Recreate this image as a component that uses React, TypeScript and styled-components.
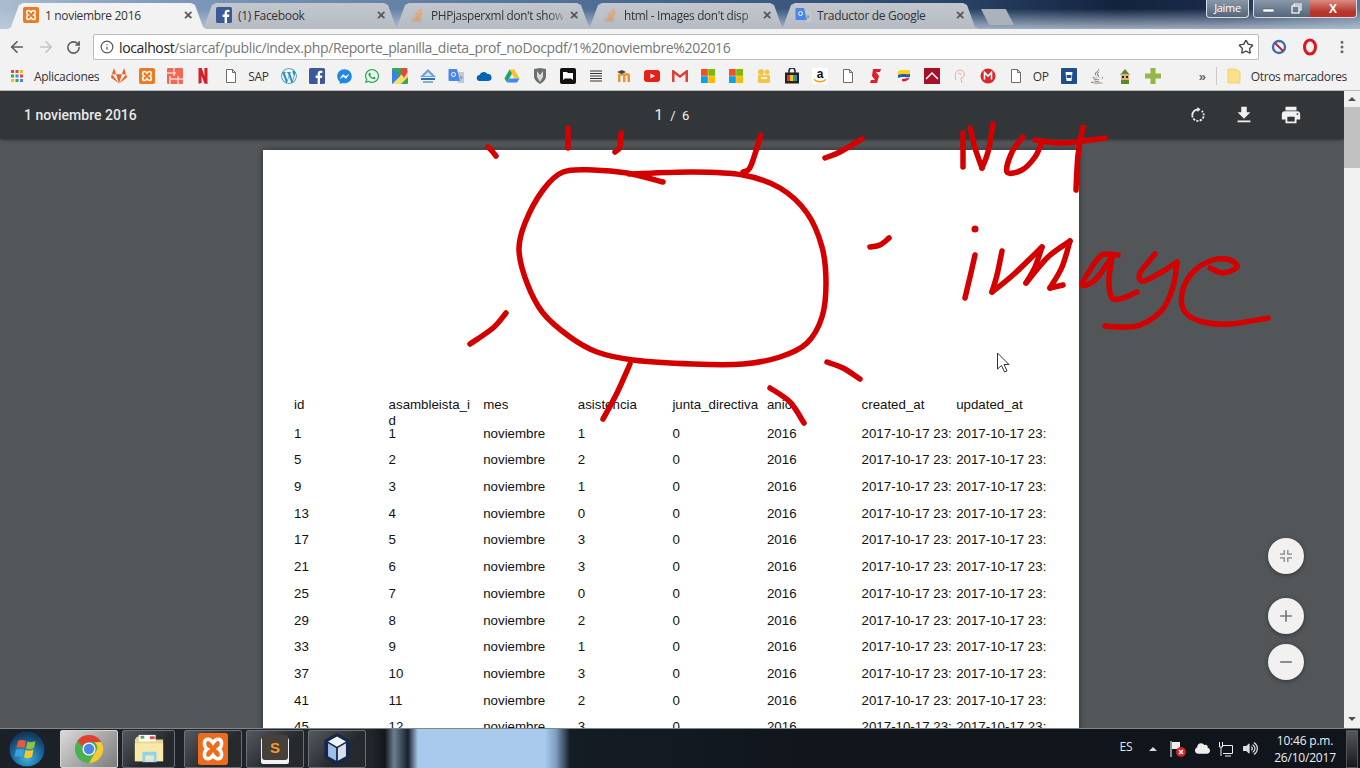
import React from 'react';
import { styled, createGlobalStyle } from 'styled-components';
import { ArrowLeft, ArrowRight, RotateCw, Star, Info, MoreVertical } from 'lucide-react';
import { FaGitlab, FaWordpressSimple, FaFacebookMessenger, FaWhatsapp, FaJava, FaCloud, FaVolumeUp } from 'react-icons/fa';
import { MdFileDownload, MdPrint, MdAdd, MdRemove } from 'react-icons/md';

const Global = createGlobalStyle`
  html, body { margin: 0; padding: 0; overflow: hidden; background: #525659; }
  * { box-sizing: border-box; }
`;

/* ---------- little logos ---------- */

const Xampp = ({ size = 16 }: { size?: number }) => (
  <svg width={size} height={size} viewBox="0 0 16 16">
    <rect width="16" height="16" rx="2" fill="#f0781e" />
    <path d="M5.5 3.5c-2.4 0-2.4 3.6-.4 4.5-2 .9-2 4.5.4 4.5 1.2 0 2-1 2.5-1.8.5.8 1.3 1.8 2.5 1.8 2.4 0 2.4-3.6.4-4.5 2-.9 2-4.5-.4-4.5-1.2 0-2 1-2.5 1.8-.5-.8-1.3-1.8-2.5-1.8z" fill="none" stroke="#fff" strokeWidth="1.6" />
  </svg>
);
const FbSquare = ({ c = '#3b5998' }: { c?: string }) => (
  <svg width="16" height="16" viewBox="0 0 16 16">
    <rect width="16" height="16" rx="1.5" fill={c} />
    <path d="M11 16v-6h2l.3-2.4H11V6.2c0-.7.2-1.2 1.2-1.2h1.2V2.900c-.3 0-1-.1-1.800-.1-1.800 0-3 1.100-3 3.100v1.700h-2V10h2v6z" fill="#fff" />
  </svg>
);
const StackIcon = () => (
  <svg width="16" height="16" viewBox="0 0 16 16" fill="none" strokeWidth="1.3">
    <path d="M3 10v4.500h9V10" stroke="#b9b2a8" />
    <path d="M4.500 13h6M4.700 10.800l5.800.8M5.300 8.500l5.600 2M6.500 6l5 3.200" stroke="#e59a5c" />
    <path d="M8.500 3.500l3.800 4.500M11 1.500l2 5.400" stroke="#e8a468" />
  </svg>
);
const GTranslate = () => (
  <svg width="16" height="16" viewBox="0 0 16 16">
    <path d="M8 4l8 0v11l-6 0z" fill="#c4c9cf" />
    <path d="M1.500 1h7.500l3 12H1.500a1 1 0 0 1-1-1V2a1 1 0 0 1 1-1z" fill="#4a86e8" />
    <circle cx="5.500" cy="6.500" r="2" fill="none" stroke="#fff" strokeWidth="1" />
    <path d="M13 7l.6 1.800h1.600l-1.300 1 .5 1.800-1.400-1-1.400 1 .5-1.800z" fill="#8d949c" />
  </svg>
);
const PageIcon = () => (
  <svg width="16" height="16" viewBox="0 0 16 16" fill="#fff" stroke="#6c6c6c">
    <path d="M3.500 1.500h6l3 3v10h-9zM9.500 1.500v3h3" />
  </svg>
);
const AppsGrid = () => (
  <svg width="16" height="16" viewBox="0 0 16 16">
    {['#ea4335', '#e8483a', '#fbbc05', '#34a853', '#4285f4', '#ea4335', '#fbbc05', '#34a853', '#4285f4'].map((c, i) => (
      <rect key={i} x={2 + (i % 3) * 4.500} y={2 + Math.floor(i / 3) * 4.500} width="3" height="3" fill={c} />
    ))}
  </svg>
);
const Brackets = () => (
  <svg width="16" height="16" viewBox="0 0 16 16">
    <rect width="16" height="16" rx="1" fill="#ef6a53" />
    <path d="M0 5h9M7 0v8M3 8v8M3 11h13M11 8v8" stroke="#fff" strokeWidth="1" />
  </svg>
);
const Netflix = () => (
  <svg width="16" height="16" viewBox="0 0 16 16">
    <path d="M3.500 0h3.200l2.700 8V0h3.100v16l-3.100-.5-2.800-7.700V15l-3.100.8z" fill="#d81f26" />
  </svg>
);
const Maps = () => (
  <svg width="16" height="16" viewBox="0 0 16 16">
    <rect width="16" height="16" rx="1" fill="#35a853" />
    <path d="M0 16L16 0v9l-7 7z" fill="#f7e06a" />
    <path d="M0 16L8 8 0 1z" fill="#3f7fe8" />
    <path d="M12 0a3.500 3.500 0 0 1 3.500 3.500C15.500 6 12.500 8 12 10c-.5-2-3.500-4-3.500-6.500A3.500 3.500 0 0 1 12 0z" fill="#e2493b" />
  </svg>
);
const Mountains = () => (
  <svg width="16" height="16" viewBox="0 0 16 16">
    <path d="M8 1l8 8H0z" fill="#6fa0d8" />
    <path d="M8 4l4 4H4z" fill="#d9e8f6" />
    <path d="M1 10h14v2H1z" fill="#2f70b5" />
    <path d="M3 13h10v2H3z" fill="#80aede" />
  </svg>
);
const OneDrive = ({ c = '#0a64b4' }: { c?: string }) => (
  <svg width="16" height="16" viewBox="0 0 16 16">
    <path d="M4 13a3 3 0 0 1-.5-6A4.500 4.500 0 0 1 11.500 6 3.500 3.500 0 0 1 12.500 13z" fill={c} />
  </svg>
);
const GDrive = () => (
  <svg width="16" height="16" viewBox="0 0 16 16">
    <path d="M5.500 1.500h5l5 9h-5z" fill="#fbc02d" />
    <path d="M5.500 1.500L.5 10.500 3 14.500l5-9z" fill="#1fa463" />
    <path d="M3 14.500h10l2.500-4H5.500z" fill="#4285f4" />
  </svg>
);
const Shield = () => (
  <svg width="16" height="16" viewBox="0 0 16 16">
    <path d="M2 1l6-1 6 1v7c0 4-3 6-6 8-3-2-6-4-6-8z" fill="#6b6f70" />
    <path d="M5 3l3 4 3-4v6l-3 5-3-5z" fill="#d7d9d9" />
  </svg>
);
const BlackBox = () => (
  <svg width="16" height="16" viewBox="0 0 16 16">
    <rect width="16" height="16" rx="2" fill="#111" />
    <path d="M3 4h4l1 1h5v7l-2-1.500H5L3 12z" fill="#fff" />
  </svg>
);
const Lines = () => (
  <svg width="16" height="16" viewBox="0 0 16 16">
    <path d="M2 3h12M2 5.500h12M2 8h12M2 10.500h12M2 13h12" stroke="#333" strokeWidth="1" />
  </svg>
);
const Moodle = () => (
  <svg width="16" height="16" viewBox="0 0 16 16">
    <path d="M2 7c0-2 4-3 6-1 2-2 6-1 6 1v7h-2.500V8c-1-1-2-.5-2 .5V14H7V8.500c0-1-1-1.500-2.500-.5v6H2z" fill="#e8962e" />
    <path d="M1 4l5-2 4 2-4 2z" fill="#444" />
  </svg>
);
const Youtube = () => (
  <svg width="16" height="16" viewBox="0 0 16 16">
    <rect y="2" width="16" height="12" rx="3" fill="#e62117" />
    <path d="M6.500 5.500L11 8l-4.500 2.500z" fill="#fff" />
  </svg>
);
const Gmail = () => (
  <svg width="16" height="16" viewBox="0 0 16 16">
    <rect y="2" width="16" height="12" fill="#eee" />
    <path d="M0 2v12h2.500V6L8 10l5.500-4v8H16V2h-1.500L8 7 1.500 2z" fill="#d44638" />
  </svg>
);
const Windows = () => (
  <svg width="16" height="16" viewBox="0 0 16 16">
    <rect x="1" y="1" width="6.800" height="6.800" fill="#f25022" />
    <rect x="8.200" y="1" width="6.800" height="6.800" fill="#7fba00" />
    <rect x="1" y="8.200" width="6.800" height="6.800" fill="#00a4ef" />
    <rect x="8.200" y="8.200" width="6.800" height="6.800" fill="#ffb900" />
  </svg>
);
const Film = () => (
  <svg width="16" height="16" viewBox="0 0 16 16">
    <circle cx="5" cy="4" r="3" fill="#f4c545" />
    <circle cx="11" cy="4" r="2.500" fill="#f4c545" />
    <rect x="2" y="7" width="12" height="8" rx="1" fill="#f4c545" />
    <path d="M5 10h6" stroke="#fff" strokeWidth="1.500" />
  </svg>
);
const Bag = () => (
  <svg width="16" height="16" viewBox="0 0 16 16">
    <path d="M5 5V3a3 3 0 0 1 6 0v2" fill="none" stroke="#222" strokeWidth="1.500" />
    <rect x="1" y="4.500" width="14" height="11" fill="#222" />
    <path d="M3 7h3v6H3z" fill="#e8372c" />
    <path d="M6 7h3v6H6z" fill="#f7c325" />
    <path d="M9 7h2v6H9z" fill="#3ba55d" />
    <path d="M11 7h2v6h-2z" fill="#2f80d0" />
  </svg>
);
const Amazon = () => (
  <svg width="16" height="16" viewBox="0 0 16 16">
    <rect width="16" height="16" rx="2" fill="#fff" />
    <text x="8" y="10" textAnchor="middle" fontSize="12" fontWeight="700" fontFamily="Liberation Sans, sans-serif" fill="#111">a</text>
    <path d="M2 11.500c3.500 3 8.500 3 12 0" fill="none" stroke="#f90" strokeWidth="1.500" />
  </svg>
);
const Scotia = () => (
  <svg width="16" height="16" viewBox="0 0 16 16">
    <path d="M5 1h8l-1 3H8l3 4-2 7H2l1-3h4L4 8z" fill="#e01f26" />
  </svg>
);
const FlagMark = () => (
  <svg width="16" height="16" viewBox="0 0 16 16">
    <path d="M2 3c4-2 8 0 12-1v4c-4 1-8-1-12 1z" fill="#fcd116" />
    <path d="M2 7c4-2 8 0 12-1v3c-4 1-8-1-12 1z" fill="#1e5bb0" />
    <path d="M6 11l7-1v1c-2 2-5 3-7 2z" fill="#d6202c" />
  </svg>
);
const RedTent = () => (
  <svg width="16" height="16" viewBox="0 0 16 16">
    <rect width="16" height="16" fill="#a4122a" />
    <path d="M2 11l6-6 6 6" fill="none" stroke="#fff" strokeWidth="1.500" />
  </svg>
);
const Sketchy = () => (
  <svg width="16" height="16" viewBox="0 0 16 16" fill="none" stroke="#eda6a0" strokeWidth="1">
    <path d="M4 12C2 7 4 2 8 2c3 0 5 3 4 6-1 2-3 1-3 3l1 4M6 6c1-1 3-1 3 1" />
  </svg>
);
const Mega = () => (
  <svg width="16" height="16" viewBox="0 0 16 16">
    <circle cx="8" cy="8" r="7.500" fill="#d9272e" />
    <path d="M4.500 11.500v-7L8 8l3.500-3.500v7" fill="none" stroke="#fff" strokeWidth="1.600" />
  </svg>
);
const BlueCup = () => (
  <svg width="16" height="16" viewBox="0 0 16 16">
    <rect width="16" height="16" rx="1" fill="#1f4f8b" />
    <path d="M4.500 4h7l-1 9h-5z" fill="#fff" />
    <path d="M5.500 7h5l-.3 3H5.800z" fill="#1f4f8b" />
  </svg>
);
const Link = () => (
  <svg width="16" height="16" viewBox="0 0 16 16">
    <path d="M3 7l5-6 5 6z" fill="#5c8a2a" />
    <rect x="4" y="6" width="8" height="6" fill="#e2b27a" />
    <rect x="5" y="8" width="2" height="2" fill="#222" />
    <rect x="9" y="8" width="2" height="2" fill="#222" />
    <rect x="4" y="12" width="8" height="4" fill="#5c8a2a" />
  </svg>
);
const Plus = () => (
  <svg width="16" height="16" viewBox="0 0 16 16">
    <path d="M5.500 0h5v5.500H16v5h-5.500V16h-5v-5.500H0v-5h5.500z" fill="#93b84a" />
  </svg>
);
const FolderMark = () => (
  <svg width="16" height="16" viewBox="0 0 16 16">
    <path d="M2 1h8l4 3v11H2z" fill="#fbe08a" stroke="#e9c860" strokeWidth=".7" />
  </svg>
);
const RotateDashed = () => (
  <svg width="20" height="20" viewBox="0 0 20 20" fill="none" stroke="#f1f1f1" strokeWidth="1.800">
    <path d="M10 4.500a5.700 5.700 0 0 0-5.700 5.700" />
    <path d="M4.300 10.200a5.700 5.700 0 0 0 11.400 0" strokeDasharray="2.200 1.300" />
    <path d="M15.700 10.200a5.700 5.700 0 0 0-2-4.300" strokeDasharray="1.600 1.400" />
    <path d="M9.500 2v5l3-2.500z" fill="#f1f1f1" stroke="none" />
  </svg>
);
const FitIcon = () => (
  <svg width="12" height="12" viewBox="0 0 12 12" fill="none" stroke="#858585" strokeWidth="1.300">
    <path d="M4.200 0v4.200H0M7.800 0v4.200H12M4.200 12V7.800H0M7.800 12V7.800H12" />
  </svg>
);
const ChromeLogo = () => (
  <svg width="30" height="30" viewBox="0 0 32 32">
    <circle cx="16" cy="16" r="15" fill="#4caf50" />
    <path d="M16 1a15 15 0 0 1 13 7.500H16a7.500 7.500 0 0 0-7 4.500L3.500 7.500A15 15 0 0 1 16 1z" fill="#e53f35" />
    <path d="M29 8.500A15 15 0 0 1 16 31l6.500-11A7.500 7.500 0 0 0 22 8.500z" fill="#fcc934" />
    <circle cx="16" cy="16" r="7" fill="#f3f3f3" />
    <circle cx="16" cy="16" r="5.500" fill="#4a86e8" />
  </svg>
);
const FolderLogo = () => (
  <svg width="32" height="32" viewBox="0 0 34 32">
    <path d="M2 6l2-3h9l2 3h17v23H2z" fill="#e8d58e" />
    <rect x="6" y="1" width="18" height="7" fill="#fff" />
    <rect x="8" y="2" width="4" height="3" fill="#4caf50" />
    <rect x="18" y="2.500" width="5" height="3" fill="#e2493b" />
    <path d="M2 10h30v19H2z" fill="#f8e9a8" />
    <path d="M10 19h15v11h-3v-7H13v7h-3z" fill="#8fd3f0" />
    <rect x="13" y="27" width="9" height="3" fill="#bfe6f6" />
  </svg>
);
const XamppLogo = () => (
  <svg width="30" height="32" viewBox="0 0 34 36">
    <rect width="34" height="36" rx="3" fill="#ee6c1d" />
    <path d="M11.500 7C6 7 6 15 10.500 18 6 21 6 29 11.500 29c2.800 0 4.500-2.500 5.500-4 1 1.500 2.700 4 5.500 4C28 29 28 21 23.500 18 28 15 28 7 22.500 7c-2.800 0-4.500 2.500-5.500 4-1-1.500-2.700-4-5.500-4z" fill="none" stroke="#fff" strokeWidth="4" />
  </svg>
);
const SublimeLogo = () => (
  <svg width="30" height="30" viewBox="0 0 30 30">
    <rect x="1" y="4" width="28" height="26" rx="2" fill="#f1f1f1" />
    <rect x="2" y="1" width="26" height="25" rx="3" fill="#45403c" />
    <text x="15" y="19" textAnchor="middle" fontSize="15" fontFamily="Liberation Sans, sans-serif" fontWeight="700" fill="#f39a2c">S</text>
  </svg>
);
const CubeLogo = () => (
  <svg width="28" height="34" viewBox="0 0 30 38">
    <path d="M15 1l14 8v20l-14 8-14-8V9z" fill="#132750" />
    <path d="M15 5l10 5.500-10 6-10-6z" fill="#f0f4f8" />
    <path d="M5 12.500l9 5.500v14l-9-5z" fill="#9fc0e6" />
    <path d="M25 12.500l-9 5.500v14l9-5z" fill="#d9dfe6" />
  </svg>
);
const WinOrb = () => (
  <svg width="38" height="38" viewBox="0 0 38 38">
    <defs>
      <radialGradient id="orb" cx="50%" cy="75%" r="65%">
        <stop offset="0" stopColor="#3fb0dc" />
        <stop offset=".6" stopColor="#1c6a9c" />
        <stop offset="1" stopColor="#153a5c" />
      </radialGradient>
    </defs>
    <circle cx="19" cy="19" r="18" fill="url(#orb)" stroke="#0d2438" />
    <path d="M10 11c3-1.500 5-1 8 0l-1.500 7c-3-1-5-1-8 0z" fill="#e8583a" />
    <path d="M19.500 11.500c3 1 5 1 8-.5l-1.500 7c-3 1.500-5 1.500-8 .5z" fill="#8cc63f" />
    <path d="M8 19.500c3-1 5-1 8 0L14.500 27c-3-1-5-1-8 0z" fill="#3aa0e0" />
    <path d="M17.500 20c3 1 5 1 8-.5L24 27c-3 1.500-5 1.500-8 .5z" fill="#f7c52d" />
  </svg>
);

/* ---------- window chrome ---------- */

const Frame = styled.div`
  position: relative;
  width: 1360px;
  height: 768px;
  display: flex;
  flex-direction: column;
  overflow: hidden;
  font-family: 'Open Sans', 'Liberation Sans', sans-serif;
`;
const TabStrip = styled.div`
  height: 29px;
  flex: none;
  display: flex;
  padding: 3px 0 0 8px;
  background:
    linear-gradient(180deg, rgba(20, 40, 70, 0) 30%, rgba(190, 205, 220, 0.8) 100%),
    linear-gradient(90deg, #a9bdd0 0, #7f9abb 12%, #46648c 50%, #2a4468 70%, #12233f 82%, #1a2c4a 90%, #5c7690 100%);
`;
const Tab = styled.div<{ $active?: boolean }>`
  width: 198px;
  height: 26px;
  margin-right: -5px;
  padding: 0 13px 2px 15px;
  display: flex;
  align-items: center;
  gap: 6px;
  font-size: 12px;
  letter-spacing: -0.33px;
  color: #333;
  position: relative;
  z-index: ${(p) => (p.$active ? 2 : 1)};
  background: ${(p) => (p.$active ? '#f2f2f2' : 'linear-gradient(180deg,#c2c7cd,#b6bcc4)')};
  clip-path: polygon(0 100%, 3px 92%, 11px 8%, 15px 0, calc(100% - 15px) 0, calc(100% - 11px) 8%, calc(100% - 3px) 92%, 100% 100%);
`;
const TabTitle = styled.span<{ $fade?: boolean }>`
  flex: 1;
  min-width: 0;
  white-space: nowrap;
  overflow: hidden;
  font-size: ${(p) => (p.$fade ? '11.8px' : '12px')};
  -webkit-mask-image: ${(p) => (p.$fade ? 'linear-gradient(90deg,#000 88%,rgba(0,0,0,.25) 100%)' : 'none')};
`;
const TabClose = styled.span`
  width: 10px;
  height: 10px;
  font: 700 15px/10px 'Liberation Sans', sans-serif;
  color: #555;
  text-align: center;
`;
const NewTab = styled.div`
  width: 33px;
  height: 16px;
  margin: 6px 0 0 8px;
  background: #aab2bc;
  clip-path: polygon(0 0, 75% 0, 100% 100%, 25% 100%);
`;
const WindowControls = styled.div`
  margin-left: auto;
  margin-top: -3px;
  padding-right: 3px;
  display: flex;
  gap: 4px;
  height: 18px;
`;
const UserBadge = styled.div`
  width: 43px;
  height: 18px;
  border: 1px solid #d7dde4;
  border-top: 0;
  border-radius: 0 0 4px 4px;
  background: linear-gradient(180deg, #8a98a8, #55657a);
  color: #fff;
  font-size: 11px;
  letter-spacing: -0.3px;
  text-align: center;
  line-height: 16px;
`;
const Caption = styled.div`
  display: flex;
  height: 18px;
  border: 1px solid #d7dde4;
  border-top: 0;
  border-radius: 0 0 4px 4px;
  overflow: hidden;
`;
const CaptionBtn = styled.div<{ $w: number; $close?: boolean }>`
  width: ${(p) => p.$w}px;
  display: flex;
  align-items: center;
  justify-content: center;
  background: ${(p) => (p.$close ? 'linear-gradient(180deg,#d98c80,#b8342a 70%)' : 'linear-gradient(180deg,#8a98a8,#55657a)')};
  color: #fff;
  font: 700 12px 'Liberation Sans', sans-serif;
`;
const Toolbar = styled.div`
  height: 34px;
  flex: none;
  background: #f2f2f2;
  display: flex;
  align-items: center;
  padding: 2px 0 0 7px;
`;
const NavBtn = styled.div<{ $w?: number }>`
  width: ${(p) => p.$w ?? 28}px;
  display: flex;
  justify-content: center;
`;
const Omnibox = styled.div`
  width: 1166px;
  height: 26px;
  margin: 0 8px 0 12px;
  background: #fff;
  border: 1px solid #bdbdbd;
  border-radius: 2px;
  display: flex;
  align-items: center;
  padding: 0 4px 0 6px;
  font-size: 14px;
  letter-spacing: -0.37px;
  color: #767676;
`;
const Url = styled.span`
  flex: 1;
  margin-left: 5px;
  white-space: nowrap;
  b { font-weight: 400; color: #222; }
`;
const BookmarksBar = styled.div`
  height: 28px;
  flex: none;
  background: #f2f2f2;
  border-bottom: 1px solid #b9b9b9;
  display: flex;
  align-items: center;
  padding: 0 7px 1px 3px;
  font-size: 12px;
  letter-spacing: -0.33px;
  color: #333;
`;
const Bookmark = styled.div`
  height: 22px;
  padding: 0 6px;
  display: flex;
  align-items: center;
  gap: 9px;
  flex: none;
  white-space: nowrap;
  svg { flex: none; }
`;
const Chevrons = styled.span`
  margin-left: auto;
  margin-right: 10px;
  font: 700 13px 'Liberation Sans', sans-serif;
  color: #666;
`;
const Divider = styled.span`
  width: 1px;
  height: 18px;
  background: #ccc;
  margin-right: 3px;
`;

/* ---------- pdf viewer ---------- */

const Viewer = styled.div`
  flex: 1;
  min-height: 0;
  display: flex;
  position: relative;
`;
const ViewerMain = styled.div`
  flex: 1;
  display: flex;
  flex-direction: column;
  background: #525659;
  min-width: 0;
  overflow: hidden;
`;
const PdfBar = styled.div`
  height: 48px;
  flex: none;
  background: #323639;
  box-shadow: 0 1px 3px rgba(0, 0, 0, 0.4);
  display: grid;
  grid-template-columns: 1fr 60px 1fr;
  align-items: center;
  padding: 0 42px 0 24px;
  color: #f1f1f1;
  font-family: Roboto, 'Liberation Sans', sans-serif;
`;
const PdfTitle = styled.div`
  font-size: 14px;
  font-weight: 500;
  color: #e8e8e8;
`;
const PageCount = styled.div`
  font-size: 13px;
  text-align: center;
  margin-left: 18px;
  white-space: nowrap;
  span { font-size: 15px; margin-right: 4px; }
`;
const PdfActions = styled.div`
  display: flex;
  justify-content: flex-end;
  align-items: center;
  gap: 25px;
`;
const PaperArea = styled.div`
  flex: 1;
  padding: 11px 0 0 263px;
`;
const Paper = styled.div`
  width: 816px;
  height: 900px;
  background: #fff;
  box-shadow: 0 0 6px rgba(0, 0, 0, 0.45);
  padding: 247px 0 0 31px;
  font: 13.3px/16px 'Liberation Sans', Arial, sans-serif;
  color: #111;
`;
const Row = styled.div<{ $head?: boolean }>`
  display: grid;
  grid-template-columns: repeat(8, 94.6px);
  height: ${(p) => (p.$head ? 28.7 : 26.7)}px;
`;
const Cell = styled.div`
  padding-right: 7.5px;
  word-break: break-all;
`;
const DateCell = styled.div`
  white-space: nowrap;
`;
const Scrollbar = styled.div`
  width: 16px;
  flex: none;
  background: #f1f1f1;
  display: flex;
  flex-direction: column;
  align-items: center;
  padding-top: 6px;
`;
const ArrowGlyph = styled.div<{ $down?: boolean; $light?: boolean }>`
  width: 0;
  height: 0;
  border-left: 4px solid transparent;
  border-right: 4px solid transparent;
  border-bottom: ${(p) => (p.$down ? '0' : `4px solid ${p.$light ? '#ddd' : '#505050'}`)};
  border-top: ${(p) => (p.$down ? '4px solid #505050' : '0')};
  margin-top: ${(p) => (p.$down ? 'auto' : '0')};
  margin-bottom: ${(p) => (p.$down ? '7px' : '0')};
`;
const Thumb = styled.div`
  width: 16px;
  height: 61px;
  margin-top: 6px;
  background: #c1c1c1;
`;
const FabStack = styled.div`
  position: absolute;
  right: 56px;
  top: 447px;
  display: flex;
  flex-direction: column;
  z-index: 3;
`;
const Fab = styled.div<{ $gap?: number }>`
  width: 36px;
  height: 36px;
  border-radius: 50%;
  background: #f1f1f1;
  box-shadow: 0 1px 4px rgba(0, 0, 0, 0.4);
  display: flex;
  align-items: center;
  justify-content: center;
  color: #777;
  margin-bottom: ${(p) => p.$gap ?? 0}px;
`;

/* ---------- taskbar ---------- */

const Taskbar = styled.div`
  height: 40px;
  flex: none;
  display: flex;
  align-items: center;
  padding: 0 2px 0 8px;
  border-top: 1px solid #7c8890;
  background:
    linear-gradient(90deg, #1a2026 0, #20262c 370px, #13181c 385px, #6c7f92 394px, #16202a 408px, #a8c9ec 418px, #a8c9ec 545px, #7d9ebf 556px, #141c24 570px, #10161c 800px, #10151b 100%);
`;
const Orb = styled.div`
  width: 38px;
  height: 38px;
  margin-right: 14px;
  display: flex;
`;
const TaskButton = styled.div<{ $active?: boolean; $gap?: number; $w?: number }>`
  width: ${(p) => p.$w ?? 58}px;
  height: 38px;
  margin-right: ${(p) => p.$gap ?? 4}px;
  border: 1px solid ${(p) => (p.$active ? '#d5d5d5' : '#6a7076')};
  border-radius: 2px;
  display: flex;
  align-items: center;
  justify-content: center;
  background: ${(p) =>
    p.$active ? 'linear-gradient(135deg,#dadada,#7b7b7b)' : 'linear-gradient(135deg,#55595e,#26292c 60%)'};
`;
const Tray = styled.div`
  margin-left: auto;
  display: flex;
  align-items: center;
  color: #e8e8e8;
  font-size: 12px;
`;
const TrayItem = styled.div<{ $w: number; $raise?: number }>`
  width: ${(p) => p.$w}px;
  display: flex;
  justify-content: center;
  margin-bottom: ${(p) => p.$raise ?? 0}px;
`;
const Clock = styled.div`
  width: 72px;
  margin-left: 7px;
  text-align: center;
  font-size: 12px;
  line-height: 17px;
  letter-spacing: -0.2px;
  color: #eee;
`;
const ShowDesktop = styled.div`
  width: 12px;
  height: 38px;
  margin-left: 5px;
  border: 1px solid #555;
  background: linear-gradient(180deg, #55595c, #15181a);
`;

/* ---------- the red ink drawn over the capture ---------- */

const InkLayer = styled.svg`
  position: absolute;
  left: 0;
  top: 0;
  width: 1360px;
  height: 768px;
  pointer-events: none;
  z-index: 2;
`;
// catmull-rom through the traced points
const smooth = (p: number[][]) => {
  let d = `M${p[0][0]} ${p[0][1]}`;
  for (let i = 0; i < p.length - 1; i++) {
    const a = p[i - 1] ?? p[i];
    const b = p[i];
    const c = p[i + 1];
    const e = p[i + 2] ?? c;
    d += ` C${b[0] + (c[0] - a[0]) / 6} ${b[1] + (c[1] - a[1]) / 6} ${c[0] - (e[0] - b[0]) / 6} ${c[1] - (e[1] - b[1]) / 6} ${c[0]} ${c[1]}`;
  }
  return d;
};
const strokes: number[][][] = [
  [[629, 174], [693, 172], [743, 175], [780, 188], [807, 213], [822, 247], [826, 283], [822, 317], [807, 343], [780, 357], [743, 364], [693, 364], [633, 360], [597, 352], [570, 337], [543, 313], [527, 283], [519, 250], [525, 223], [543, 190], [563, 172], [593, 170], [627, 173], [663, 182]],
  [[488, 147], [492, 151], [496, 156]],
  [[568, 128], [568, 138], [568, 148]],
  [[621, 133], [620, 147], [615, 152]],
  [[761, 135], [752, 163], [748, 170], [743, 172]],
  [[862, 139], [840, 152], [825, 158]],
  [[870, 247], [880, 245], [889, 238]],
  [[506, 313], [493, 328], [470, 344]],
  [[630, 364], [617, 393], [603, 419]],
  [[770, 388], [790, 402], [804, 423]],
  [[827, 362], [843, 368], [860, 379]],
  // Not
  [[963, 167], [963, 145], [963, 133]],
  [[970, 128], [975, 148], [982, 168]],
  [[982, 168], [988, 152], [993, 124]],
  [[1023, 137], [1012, 152], [1007, 172], [1022, 170], [1035, 157], [1042, 142]],
  [[1035, 140], [1063, 143], [1105, 138]],
  [[1083, 127], [1078, 155], [1076, 190]],
  // image
  [[975, 255], [970, 277], [965, 298]],
  [[1002, 251], [997, 275], [992, 292]],
  [[992, 292], [1013, 275], [1042, 247]],
  [[1042, 247], [1035, 267], [1026, 283]],
  [[1026, 283], [1048, 257], [1070, 241]],
  [[1070, 241], [1062, 267], [1050, 288]],
  [[1050, 288], [1063, 285]],
  [[1118, 255], [1102, 255], [1090, 270], [1082, 285], [1095, 280], [1112, 257]],
  [[1112, 257], [1109, 280], [1112, 298], [1123, 298], [1137, 292]],
  [[1155, 254], [1140, 273], [1143, 281], [1160, 273], [1177, 262]],
  [[1177, 262], [1173, 287], [1162, 310], [1140, 325], [1120, 327], [1105, 326]],
  [[1210, 268], [1223, 273], [1237, 267], [1230, 260], [1213, 260], [1193, 272], [1182, 293], [1185, 312], [1203, 322], [1230, 324], [1268, 318]],
];

const rowsData = [
  [1, 1, 1], [5, 2, 2], [9, 3, 1], [13, 4, 0], [17, 5, 3], [21, 6, 3],
  [25, 7, 0], [29, 8, 2], [33, 9, 1], [37, 10, 3], [41, 11, 2], [45, 12, 3],
];
const headers = ['id', 'asambleista_id', 'mes', 'asistencia', 'junta_directiva', 'anio', 'created_at', 'updated_at'];

const tabs = [
  { icon: <Xampp />, title: '1 noviembre 2016', active: true },
  { icon: <FbSquare />, title: '(1) Facebook' },
  { icon: <StackIcon />, title: "PHPjasperxml don't show", fade: true },
  { icon: <StackIcon />, title: "html - Images don't disp", fade: true },
  { icon: <GTranslate />, title: 'Traductor de Google' },
];

const bookmarks: { icon: React.ReactNode; label?: string }[] = [
  { icon: <AppsGrid />, label: 'Aplicaciones' },
  { icon: <FaGitlab size={16} color="#e8642c" /> },
  { icon: <Xampp /> },
  { icon: <Brackets /> },
  { icon: <Netflix /> },
  { icon: <PageIcon />, label: 'SAP' },
  { icon: <FaWordpressSimple size={16} color="#2a8fc0" /> },
  { icon: <FbSquare c="#3b5998" /> },
  { icon: <FaFacebookMessenger size={15} color="#1e88e5" /> },
  { icon: <FaWhatsapp size={16} color="#1faa4f" /> },
  { icon: <Maps /> },
  { icon: <Mountains /> },
  { icon: <GTranslate /> },
  { icon: <OneDrive /> },
  { icon: <GDrive /> },
  { icon: <Shield /> },
  { icon: <BlackBox /> },
  { icon: <Lines /> },
  { icon: <Moodle /> },
  { icon: <Youtube /> },
  { icon: <Gmail /> },
  { icon: <Windows /> },
  { icon: <Windows /> },
  { icon: <Film /> },
  { icon: <Bag /> },
  { icon: <Amazon /> },
  { icon: <PageIcon /> },
  { icon: <Scotia /> },
  { icon: <FlagMark /> },
  { icon: <RedTent /> },
  { icon: <Sketchy /> },
  { icon: <Mega /> },
  { icon: <PageIcon />, label: 'OP' },
  { icon: <BlueCup /> },
  { icon: <FaJava size={16} color="#6b6b6b" /> },
  { icon: <Link /> },
  { icon: <Plus /> },
];

export default function App() {
  return (
    <Frame>
      <Global />
      <TabStrip>
        {tabs.map((t) => (
          <Tab key={t.title} $active={t.active}>
            {t.icon}
            <TabTitle $fade={t.fade}>{t.title}</TabTitle>
            <TabClose>×</TabClose>
          </Tab>
        ))}
        <NewTab />
        <WindowControls>
          <UserBadge>Jaime</UserBadge>
          <Caption>
            <CaptionBtn $w={29}>
              <svg width="11" height="8" viewBox="0 0 11 8"><rect y="4" width="11" height="3" fill="#fff" stroke="#445" strokeWidth=".5" /></svg>
            </CaptionBtn>
            <CaptionBtn $w={27}>
              <svg width="11" height="11" viewBox="0 0 11 11" fill="none" stroke="#fff" strokeWidth="1.200"><path d="M3 3V1h7v6H8" /><rect x="1" y="3" width="7" height="7" /></svg>
            </CaptionBtn>
            <CaptionBtn $w={46} $close>X</CaptionBtn>
          </Caption>
        </WindowControls>
      </TabStrip>

      <Toolbar>
        <NavBtn $w={20}><ArrowLeft size={18} color="#5a5a5a" strokeWidth={2.2} /></NavBtn>
        <NavBtn $w={38}><ArrowRight size={18} color="#c4c4c4" strokeWidth={2.2} /></NavBtn>
        <NavBtn $w={16}><RotateCw size={15} color="#5a5a5a" strokeWidth={2.5} /></NavBtn>
        <Omnibox>
          <Info size={14} color="#555" />
          <Url><b>localhost</b>/siarcaf/public/index.php/Reporte_planilla_dieta_prof_noDocpdf/1%20noviembre%202016</Url>
          <Star size={16} color="#444" />
        </Omnibox>
        <NavBtn $w={24}>
          <svg width="16" height="16" viewBox="0 0 16 16" fill="none">
            <circle cx="8" cy="8" r="6" stroke="#3f6fb0" strokeWidth="2.400" />
            <path d="M4 4l8 8" stroke="#b22a35" strokeWidth="2" />
          </svg>
        </NavBtn>
        <NavBtn $w={38}>
          <svg width="16" height="18" viewBox="0 0 16 18">
            <ellipse cx="8" cy="9" rx="5.500" ry="7" fill="none" stroke="#e0141e" strokeWidth="3" />
          </svg>
        </NavBtn>
        <NavBtn $w={26}><MoreVertical size={16} color="#666" strokeWidth={2.5} /></NavBtn>
      </Toolbar>

      <BookmarksBar>
        {bookmarks.map((b, i) => (
          <Bookmark key={i}>
            {b.icon}
            {b.label}
          </Bookmark>
        ))}
        <Chevrons>»</Chevrons>
        <Divider />
        <Bookmark>
          <FolderMark />
          Otros marcadores
        </Bookmark>
      </BookmarksBar>

      <Viewer>
        <ViewerMain>
          <PdfBar>
            <PdfTitle>1 noviembre 2016</PdfTitle>
            <PageCount><span>1</span> / &nbsp;6</PageCount>
            <PdfActions>
              <RotateDashed />
              <MdFileDownload size={22} color="#f1f1f1" />
              <MdPrint size={22} color="#f1f1f1" />
            </PdfActions>
          </PdfBar>
          <PaperArea>
            <Paper>
              <Row $head>
                {headers.map((h) => <Cell key={h}>{h}</Cell>)}
              </Row>
              {rowsData.map(([id, asm, asis]) => (
                <Row key={id}>
                  <Cell>{id}</Cell>
                  <Cell>{asm}</Cell>
                  <Cell>noviembre</Cell>
                  <Cell>{asis}</Cell>
                  <Cell>0</Cell>
                  <Cell>2016</Cell>
                  <DateCell>2017-10-17 23:</DateCell>
                  <DateCell>2017-10-17 23:</DateCell>
                </Row>
              ))}
            </Paper>
          </PaperArea>
        </ViewerMain>
        <Scrollbar>
          <ArrowGlyph />
          <Thumb />
          <ArrowGlyph $down />
        </Scrollbar>
        <FabStack>
          <Fab $gap={24}><FitIcon /></Fab>
          <Fab $gap={10}><MdAdd size={20} /></Fab>
          <Fab><MdRemove size={20} /></Fab>
        </FabStack>
      </Viewer>

      <Taskbar>
        <Orb><WinOrb /></Orb>
        <TaskButton $active><ChromeLogo /></TaskButton>
        <TaskButton $gap={9} $w={53}><FolderLogo /></TaskButton>
        <TaskButton><XamppLogo /></TaskButton>
        <TaskButton><SublimeLogo /></TaskButton>
        <TaskButton><CubeLogo /></TaskButton>
        <Tray>
          <TrayItem $w={28} $raise={4}>ES</TrayItem>
          <TrayItem $w={26}><ArrowGlyph $light /></TrayItem>
          <TrayItem $w={24}>
            <svg width="18" height="18" viewBox="0 0 18 18">
              <path d="M2 1v16" stroke="#ddd" strokeWidth="1.200" />
              <path d="M3 2h8v7H3z" fill="#eee" />
              <circle cx="12" cy="12" r="5" fill="#d3222a" />
              <path d="M10 10l4 4M14 10l-4 4" stroke="#fff" strokeWidth="1.400" />
            </svg>
          </TrayItem>
          <TrayItem $w={24}><FaCloud size={15} color="#eee" /></TrayItem>
          <TrayItem $w={24}>
            <svg width="16" height="16" viewBox="0 0 16 16" fill="none" stroke="#eee">
              <path d="M1.500 1v5h3V1M3 6v9M5 4.500h9.500v8H5M7 15h6" />
            </svg>
          </TrayItem>
          <TrayItem $w={24}><FaVolumeUp size={15} color="#ddd" /></TrayItem>
          <Clock>10:46 p.m.<br />26/10/2017</Clock>
        </Tray>
        <ShowDesktop />
      </Taskbar>

      <InkLayer viewBox="0 0 1360 768" fill="none" stroke="#d40000" strokeWidth="5.500" strokeLinecap="round" strokeLinejoin="round">
        {strokes.map((s, i) => <path key={i} d={smooth(s)} />)}
        <circle cx="975" cy="229" r="3.500" fill="#d40000" stroke="none" />
        <path d="M997.500 353v16l4-3.500 3 6.500 2.500-1-3-6.500h5z" fill="#fff" stroke="#333" strokeWidth="1" strokeLinecap="butt" />
      </InkLayer>
    </Frame>
  );
}
